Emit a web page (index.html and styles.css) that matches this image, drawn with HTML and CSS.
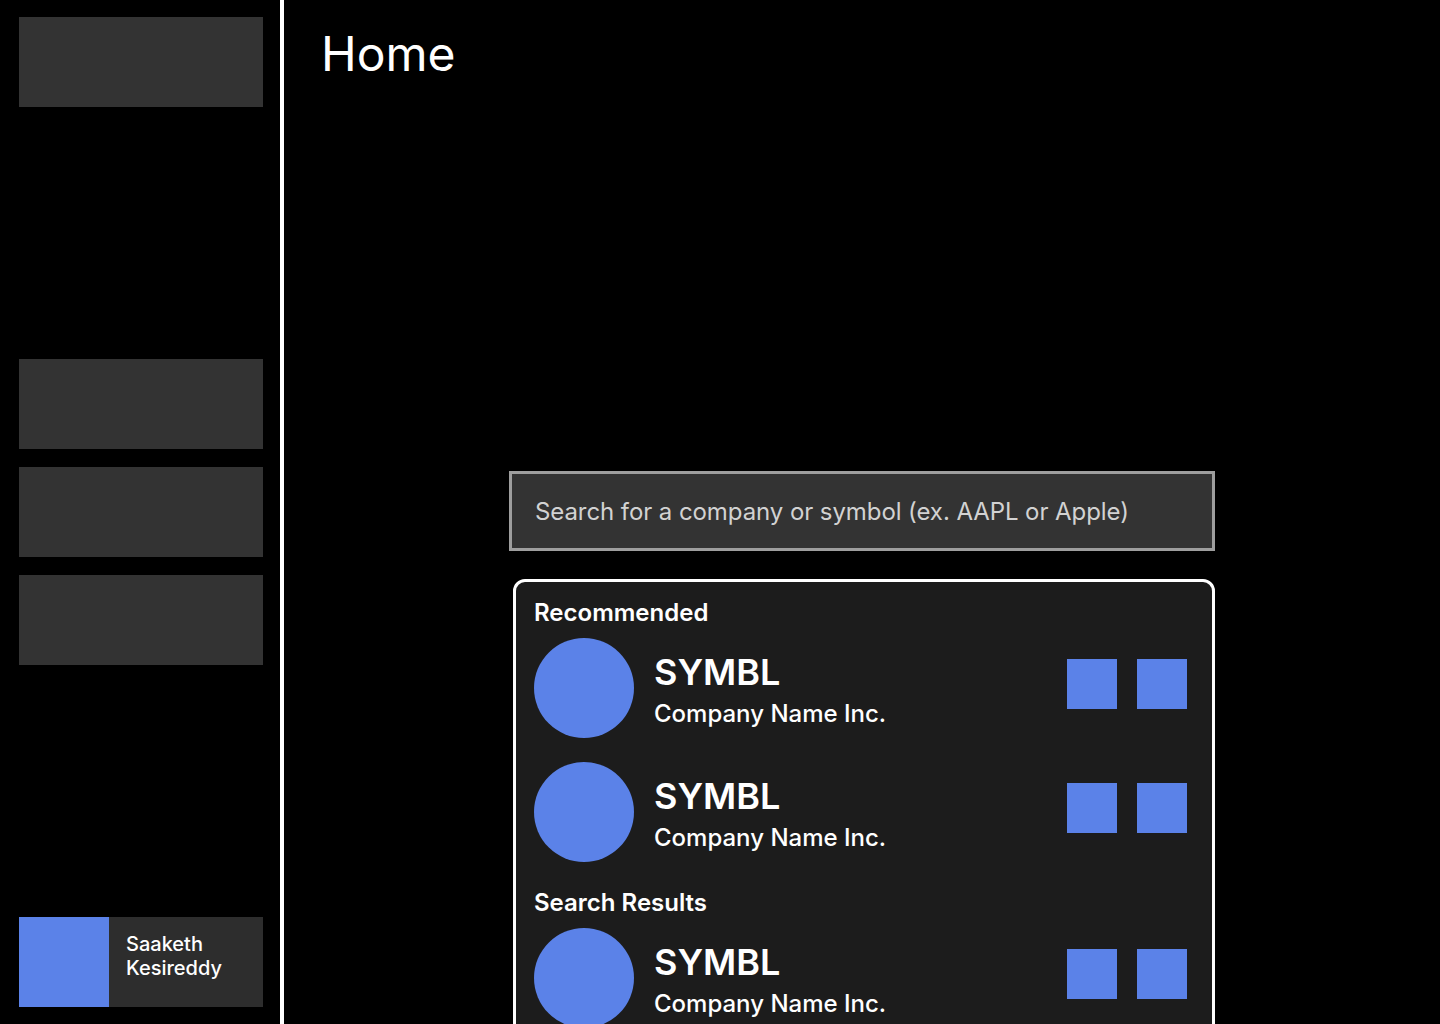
FILE: index.html
```html
<!DOCTYPE html>
<html lang="en">
<head>
<meta charset="utf-8">
<title>Home</title>
<link rel="stylesheet" href="styles.css">
</head>
<body>
<div class="app">
  <aside class="sidebar">
    <div class="nav-box"></div>
    <div class="nav-group">
      <div class="nav-box"></div>
      <div class="nav-box"></div>
      <div class="nav-box"></div>
    </div>
    <div class="profile">
      <div class="avatar"></div>
      <div class="profile-name">Saaketh<br>Kesireddy</div>
    </div>
  </aside>
  <main class="main">
    <h1 class="title">Home</h1>
    <div class="search-area">
      <div class="search-box">Search for a company or symbol (ex. AAPL or Apple)</div>
      <div class="dropdown">
        <div class="section">
          <div class="section-label">Recommended</div>
          <div class="rows">
            <div class="row">
              <div class="logo"></div>
              <div class="info"><div class="symbol">SYMBL</div><div class="company">Company Name Inc.</div></div>
              <div class="actions"><div class="action"></div><div class="action"></div></div>
            </div>
            <div class="row">
              <div class="logo"></div>
              <div class="info"><div class="symbol">SYMBL</div><div class="company">Company Name Inc.</div></div>
              <div class="actions"><div class="action"></div><div class="action"></div></div>
            </div>
          </div>
        </div>
        <div class="section section-next">
          <div class="section-label">Search Results</div>
          <div class="rows">
            <div class="row">
              <div class="logo"></div>
              <div class="info"><div class="symbol">SYMBL</div><div class="company">Company Name Inc.</div></div>
              <div class="actions"><div class="action"></div><div class="action"></div></div>
            </div>
            <div class="row">
              <div class="logo"></div>
              <div class="info"><div class="symbol">SYMBL</div><div class="company">Company Name Inc.</div></div>
              <div class="actions"><div class="action"></div><div class="action"></div></div>
            </div>
          </div>
        </div>
      </div>
    </div>
  </main>
</div>
</body>
</html>
```
FILE: styles.css
```css
* { box-sizing: border-box; }
html, body {
  margin: 0;
  padding: 0;
  height: 1024px;
  overflow: hidden;
  background: #000;
  color: #fff;
  font-family: Inter, "Noto Sans", sans-serif;
}
.app {
  display: flex;
  height: 1024px;
}
.sidebar {
  width: 284px;
  flex: none;
  border-right: 4px solid #fff;
  padding: 17px 17px 17px 19px;
  display: flex;
  flex-direction: column;
  justify-content: space-between;
}
.nav-box {
  height: 90px;
  background: #333333;
}
.nav-group {
  display: flex;
  flex-direction: column;
  gap: 18px;
}
.profile {
  height: 90px;
  display: flex;
  background: #2d2d2d;
}
.avatar {
  width: 90px;
  height: 90px;
  background: #5b82e8;
}
.profile-name {
  padding: 15px 0 0 17px;
  font-size: 20px;
  line-height: 24px;
  font-weight: 500;
}
.main {
  flex: 1;
  padding: 25px 0 0 37px;
  display: flex;
  flex-direction: column;
}
.title {
  margin: 0;
  font-size: 48px;
  line-height: 58px;
  font-weight: 400;
}
.search-area {
  margin-top: 388px;
  align-self: center;
  width: 706px;
  margin-left: -37px;
}
.search-box {
  height: 80px;
  border: 3px solid #9e9e9e;
  background: #333333;
  color: #d2d2d2;
  font-size: 24px;
  letter-spacing: -0.08px;
  display: flex;
  align-items: center;
  padding-left: 23px;
}
.dropdown {
  margin: 28px 0 0 4px;
  border: 3px solid #fff;
  border-radius: 12px;
  background: #1c1c1c;
  padding: 16px 25px 40px 18px;
}
.section-label {
  font-size: 24px;
  line-height: 29px;
  font-weight: 600;
  margin-bottom: 11px;
}
.section-next {
  margin-top: 26px;
}
.rows {
  display: flex;
  flex-direction: column;
  gap: 24px;
}
.row {
  display: flex;
  align-items: flex-start;
  height: 100px;
}
.logo {
  width: 100px;
  height: 100px;
  border-radius: 50%;
  background: #5b82e8;
  flex: none;
}
.info {
  flex: 1;
  padding: 12px 0 0 20px;
}
.symbol {
  font-size: 36px;
  line-height: 44px;
  font-weight: 600;
}
.company {
  font-size: 24px;
  line-height: 29px;
  font-weight: 500;
  margin-top: 5px;
}
.actions {
  margin-top: 21px;
  display: flex;
  gap: 20px;
}
.action {
  width: 50px;
  height: 50px;
  background: #5b82e8;
}
```
